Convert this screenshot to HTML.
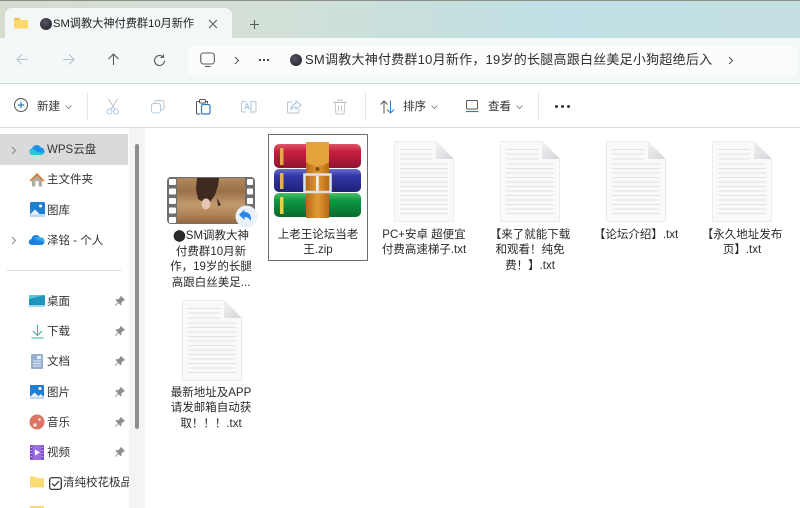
<!DOCTYPE html>
<html><head><meta charset="utf-8"><style>
*{box-sizing:border-box;margin:0;padding:0}
html,body{width:800px;height:508px;overflow:hidden;background:#fff}
body{position:relative;font-family:"Liberation Sans","Noto Sans CJK SC",sans-serif;color:#333;font-size:11.5px}
#w{position:absolute;left:0;top:0;width:800px;height:508px;overflow:hidden;filter:blur(.35px)}
.a{position:absolute}
.t{position:absolute;white-space:nowrap;line-height:16px;font-size:11.5px}
.lbl{position:absolute;width:92px;text-align:center;font-size:11.5px;line-height:15.5px;color:#2a2a2a}
svg{position:absolute;overflow:visible}
.s{fill:none;stroke:#5a5a5a;stroke-width:1.1}
.d{fill:none;stroke:#b9c3cc;stroke-width:1.1}
</style></head><body><div id="w">
<div class="a" style="left:0;top:0;width:800px;height:38px;background:linear-gradient(90deg,#d6dccf 0,#d3e0d8 35%,#c9e0dd 50%,#c0e0e5 70%,#c5e0e2 100%)"></div>
<div class="a" style="left:0;top:0;width:800px;height:1px;background:#8d9088"></div>
<div class="a" style="left:5px;top:8px;width:227px;height:32px;background:#f3f8f7;border-radius:7px 7px 0 0"></div>
<div class="a" style="left:0;top:38px;width:800px;height:46px;background:#f3f8f8;border-bottom:1px solid #d4dadb"></div>
<div class="a" style="left:188px;top:46px;width:609px;height:29px;background:#fbfdfd;border-radius:4px"></div>
<div class="a" style="left:0;top:84px;width:800px;height:44px;background:#fff;border-bottom:1px solid #dcdcdc"></div>

<!-- tab -->
<svg style="left:14px;top:17px" width="14" height="12"><path d="M0 1.500h5l2 1.500h7v8.500H0z" fill="#fbd96a"/><path d="M0 1h5l1.500 1.500H0z" fill="#e8b93c"/></svg>
<div class="a" style="left:40px;top:18px;width:12px;height:12px;border-radius:50%;background:radial-gradient(circle at 40% 35%,#55525f,#23212b)"></div>
<div class="t" style="left:53px;top:16px;font-size:11.2px;color:#222;width:141px;overflow:hidden">SM调教大神付费群10月新作</div>
<svg style="left:208px;top:19px" width="10" height="10"><path class="s" d="M1 1l8 8M9 1l-8 8"/></svg>
<svg style="left:249px;top:19px" width="11" height="11"><path class="s" d="M5.500 1v9M1 5.500h9"/></svg>

<!-- nav -->
<svg style="left:16px;top:53px" width="13" height="13"><path class="d" d="M12 6.500H1M6 1.500l-5 5 5 5"/></svg>
<svg style="left:62px;top:53px" width="13" height="13"><path class="d" d="M1 6.500h11M7 1.500l5 5-5 5"/></svg>
<svg style="left:107px;top:53px" width="13" height="13"><path class="s" d="M6.500 12V1M1.500 6l5-5 5 5"/></svg>
<svg style="left:153px;top:54px" width="13" height="13"><path class="s" d="M11.500 6.500a5 5 0 1 1-1.500-3.600M10.500 .5v3h-3"/></svg>
<svg style="left:200px;top:52px" width="16" height="16"><rect class="s" x=".8" y="1" width="13.500" height="11" rx="2.500"/><path class="s" d="M5 14.500h5.500"/></svg>
<svg style="left:234px;top:56px" width="6" height="9"><path class="s" d="M1 1l3.500 3.500L1 8"/></svg>
<div class="a" style="left:259px;top:59px;width:2px;height:2px;background:#444;box-shadow:4px 0 #444,8px 0 #444"></div>
<div class="a" style="left:290px;top:54px;width:12px;height:12px;border-radius:50%;background:radial-gradient(circle at 40% 35%,#55525f,#23212b)"></div>
<div class="t" style="left:305px;top:52px;font-size:13px;color:#2f2f2f;letter-spacing:.24px">SM调教大神付费群10月新作，19岁的长腿高跟白丝美足小狗超绝后入</div>
<svg style="left:728px;top:56px" width="6" height="9"><path class="s" d="M1 1l3.500 3.500L1 8"/></svg>

<!-- toolbar -->
<svg style="left:14px;top:98px" width="15" height="15"><circle cx="7" cy="7" r="6.500" fill="none" stroke="#555"/><path d="M7 3.800v6.400M3.800 7h6.400" stroke="#2a7cc9" stroke-width="1.200"/></svg>
<div class="t" style="left:37px;top:99px">新建</div>
<svg style="left:65px;top:105px" width="7" height="4"><path d="M.5 .5l3 3 3-3" fill="none" stroke="#777" stroke-width=".8"/></svg>
<div class="a" style="left:87px;top:92px;width:1px;height:28px;background:#e8e8e8"></div>
<svg style="left:106px;top:99px" width="14" height="16"><path d="M2.500 0l6.500 10.500M11.500 0L5 10.500" fill="none" stroke="#b7c2cc"/><circle cx="3.500" cy="12.500" r="2.500" fill="none" stroke="#a9c4de"/><circle cx="10" cy="12.500" r="2.500" fill="none" stroke="#a9c4de"/></svg>
<svg style="left:151px;top:100px" width="14" height="14"><rect x="4" y=".5" width="9" height="9" rx="2" fill="none" stroke="#b9c3cc"/><rect x=".5" y="3.500" width="9" height="9.500" rx="2" fill="#fff" stroke="#b4cde3"/></svg>
<svg style="left:196px;top:99px" width="15" height="16"><path d="M3 2.500H1.500A1 1 0 0 0 .5 3.500v10.500a1 1 0 0 0 1 1h3" fill="none" stroke="#555"/><path d="M10 2.500h1.500v2" fill="none" stroke="#555"/><rect x="3.500" y=".5" width="6" height="3.500" rx="1" fill="#fff" stroke="#555"/><rect x="5.500" y="5.500" width="8.500" height="9.500" rx="1.500" fill="#fff" stroke="#2b7cc4" stroke-width="1.200"/></svg>
<svg style="left:241px;top:100px" width="16" height="14"><path d="M5 1.500H2a1.500 1.500 0 0 0-1.500 1.500v7.500A1.500 1.500 0 0 0 2 12h3M11 1.500h2.500a1.500 1.500 0 0 1 1.500 1.500v7.500a1.500 1.500 0 0 1-1.500 1.500H11" fill="none" stroke="#b7c6d4"/><path d="M3.500 9.500l2.500-6 2.500 6M4.500 7.500h3M10 .5v13" fill="none" stroke="#a9c4de"/></svg>
<svg style="left:287px;top:100px" width="15" height="14"><path d="M5.500 2H2a1.500 1.500 0 0 0-1.500 1.500v8A1.500 1.500 0 0 0 2 13h8.500a1.500 1.500 0 0 0 1.500-1.500V9" fill="none" stroke="#b9c3cc"/><path d="M9 .8l5 4.200-5 4.200V7C6.500 7 5 8 4 10c0-3.500 2-6 5-6.500z" fill="none" stroke="#a9c4de"/></svg>
<svg style="left:333px;top:99px" width="14" height="16"><path d="M.5 3.500h13M5 3.500V1h4v2.500M2 3.500l1 11.500h8l1-11.500M5.500 6.500v6M8.500 6.500v6" fill="none" stroke="#bcc4ca"/></svg>
<div class="a" style="left:365px;top:92px;width:1px;height:28px;background:#e8e8e8"></div>
<svg style="left:380px;top:100px" width="15" height="14"><path d="M4 13.500V1M.5 4.500L4 1l3.500 3.500" fill="none" stroke="#555"/><path d="M10.500 .5V13M7 9.500l3.500 3.500L14 9.500" fill="none" stroke="#2b7cc4"/></svg>
<div class="t" style="left:403px;top:99px">排序</div>
<svg style="left:431px;top:105px" width="7" height="4"><path d="M.5 .5l3 3 3-3" fill="none" stroke="#777" stroke-width=".8"/></svg>
<svg style="left:466px;top:100px" width="13" height="13"><rect x=".5" y=".5" width="11" height="8.500" rx="1" fill="none" stroke="#555"/><path d="M0 11.500h12.500" stroke="#2b7cc4" stroke-width="1.200"/></svg>
<div class="t" style="left:488px;top:99px">查看</div>
<svg style="left:516px;top:105px" width="7" height="4"><path d="M.5 .5l3 3 3-3" fill="none" stroke="#777" stroke-width=".8"/></svg>
<div class="a" style="left:538px;top:92px;width:1px;height:28px;background:#e8e8e8"></div>
<div class="a" style="left:555px;top:105px;width:3px;height:3px;border-radius:50%;background:#333;box-shadow:6px 0 #333,12px 0 #333"></div>

<!-- sidebar -->
<div class="a" style="left:129px;top:128px;width:16px;height:380px;background:#f4f4f4"></div>
<div class="a" style="left:135px;top:144px;width:4px;height:285px;border-radius:2px;background:#8e8e8e"></div>
<div class="a" style="left:0;top:134px;width:128px;height:31px;background:#dadada"></div>
<svg style="left:11px;top:146px" width="6" height="9"><path d="M1 1l3.500 3.500L1 8" fill="none" stroke="#888"/></svg>
<svg style="left:29px;top:143px" width="16" height="13"><path d="M3.500 12A3.300 3.300 0 0 1 3 5.500 5 5 0 0 1 12 4.500 3.800 3.800 0 0 1 12.500 12z" fill="#1c8fe8"/><path d="M1 10a3 3 0 0 1 5-3c1.500 2 4 3 9 2.500-.5 1.500-1.500 2.500-3 2.500H3.500C2.500 12 1.500 11 1 10z" fill="#29c7d8"/></svg>
<div class="t" style="left:47px;top:142px">WPS云盘</div>
<svg style="left:29px;top:172px" width="16" height="15"><path d="M3 7v7.500h10V7L8 3z" fill="#b3aba2"/><rect x="6.300" y="9" width="3.400" height="5.500" fill="#fff"/><path d="M.5 8.500L8 1l7.500 7.500-1.200 1L8 3.500 1.700 9.500z" fill="#dd7a2e"/></svg>
<div class="t" style="left:47px;top:172px">主文件夹</div>
<svg style="left:30px;top:202px" width="15" height="15"><rect width="15" height="15" rx="1.500" fill="#1f7fd2"/><rect x="0" y="12" width="15" height="3" fill="#b9d8f2"/><path d="M0 12.500l5-5 5 5z" fill="#eaf4fc"/><circle cx="10.500" cy="4" r="1.500" fill="#fff"/></svg>
<div class="t" style="left:47px;top:203px">图库</div>
<svg style="left:11px;top:236px" width="6" height="9"><path d="M1 1l3.500 3.500L1 8" fill="none" stroke="#888"/></svg>
<svg style="left:29px;top:234px" width="16" height="11"><path d="M3 11A3 3 0 0 1 2.500 5 4.500 4.500 0 0 1 11 3.500 3.700 3.700 0 0 1 12.500 11z" fill="#1a80e0"/><path d="M5 4a4.500 4.500 0 0 1 6-.5 3.700 3.700 0 0 1 4.500 4.500L8 6z" fill="#38a8ea"/></svg>
<div class="t" style="left:47px;top:233px">泽铭 - 个人</div>
<div class="a" style="left:7px;top:270px;width:114px;height:1px;background:#d9d9d9"></div>

<svg style="left:29px;top:295px" width="16" height="12"><rect width="16" height="12" rx="1" fill="#1f94bd"/><path d="M0 0h16L0 4z" fill="#5ac7d9"/><rect y="10" width="16" height="2" fill="#9fd8e6"/></svg>
<div class="t" style="left:47px;top:294px">桌面</div>
<svg style="left:31px;top:325px" width="13" height="14"><path d="M6.500 0v10M2 6l4.500 4.500L11 6" fill="none" stroke="#35b79a" stroke-width="1.100"/><path d="M.5 13h12" stroke="#35b79a"/></svg>
<div class="t" style="left:47px;top:324px">下载</div>
<svg style="left:31px;top:354px" width="12" height="15"><rect width="12" height="15" rx="1" fill="#96aed0"/><rect x="6" y="2" width="4" height="3" fill="#e8eff7"/><path d="M2 7h8M2 9.500h8M2 12h8" stroke="#e8eff7"/></svg>
<div class="t" style="left:47px;top:354px">文档</div>
<svg style="left:30px;top:385px" width="14" height="14"><rect width="14" height="14" rx="1" fill="#1f7fd2"/><rect y="11.500" width="14" height="2.500" fill="#b9d8f2"/><path d="M0 12l4.500-4.500 5 4.500z" fill="#eaf4fc"/><path d="M8 12l2.500-3 3.500 3z" fill="#eaf4fc"/><circle cx="10" cy="3.500" r="1.500" fill="#fff"/></svg>
<div class="t" style="left:47px;top:385px">图片</div>
<svg style="left:29px;top:414px" width="16" height="16"><circle cx="8" cy="8" r="7.500" fill="#dc7561"/><circle cx="6" cy="11" r="1.800" fill="#f6e3dd"/><circle cx="10.500" cy="5.500" r="1.300" fill="#f6e3dd"/></svg>
<div class="t" style="left:47px;top:415px">音乐</div>
<svg style="left:30px;top:445px" width="14" height="15"><rect width="14" height="15" rx="1" fill="#7a45cf"/><rect x="2.500" width="9" height="15" fill="#9c6fe0"/><path d="M5 4.500l5 3-5 3z" fill="#fff"/><path d="M.8 2.500h1M.8 5.500h1M.8 8.500h1M.8 11.500h1M12.200 2.500h1M12.200 5.500h1M12.200 8.500h1M12.200 11.500h1" stroke="#e7dcf8"/></svg>
<div class="t" style="left:47px;top:445px">视频</div>
<svg style="left:30px;top:476px" width="14" height="12"><path d="M0 .5h5l2 1.500h7v9.500H0z" fill="#fcdc72"/></svg>
<svg style="left:49px;top:477px" width="13" height="13"><rect x=".7" y=".7" width="11.600" height="11.600" rx="2" fill="#fff" stroke="#222" stroke-width="1.200"/><path d="M3 6.500l2.500 2.500 4.500-5" fill="none" stroke="#222" stroke-width="1.100"/></svg>
<div class="t" style="left:63px;top:475px;width:66px;overflow:hidden">清纯校花极品</div>
<svg style="left:30px;top:506px" width="14" height="2"><rect width="14" height="2" fill="#fcdc72"/></svg>

<!-- pins -->
<svg width="0" height="0" style="left:0;top:0"><defs><path id="p" d="M6 0l4 4-1 .8-.6-.2-2 2 .1 2-.8.8L3.300 7 .6 9.800 0 9.800 0 9.300 2.800 6.300.4 3.900l.8-.8 2 .1 2-2-.1-.6z" fill="#8d8d8d"/></defs></svg>
<svg style="left:115px;top:296px" width="10" height="10"><use href="#p"/></svg>
<svg style="left:115px;top:326px" width="10" height="10"><use href="#p"/></svg>
<svg style="left:115px;top:356px" width="10" height="10"><use href="#p"/></svg>
<svg style="left:115px;top:387px" width="10" height="10"><use href="#p"/></svg>
<svg style="left:115px;top:417px" width="10" height="10"><use href="#p"/></svg>
<svg style="left:115px;top:447px" width="10" height="10"><use href="#p"/></svg>

<!-- files -->
<svg width="0" height="0" style="left:0;top:0"><defs>
<linearGradient id="f" x1="0" y1="0" x2="1" y2="1"><stop offset="0" stop-color="#f1f2f3"/><stop offset="1" stop-color="#d3d6d9"/></linearGradient>
<linearGradient id="r" x1="0" y1="0" x2="0" y2="1"><stop offset="0" stop-color="#e0566a"/><stop offset=".3" stop-color="#c8203f"/><stop offset="1" stop-color="#8f1430"/></linearGradient>
<linearGradient id="b" x1="0" y1="0" x2="0" y2="1"><stop offset="0" stop-color="#6a6dd0"/><stop offset=".3" stop-color="#3336a6"/><stop offset="1" stop-color="#1f2275"/></linearGradient>
<linearGradient id="g" x1="0" y1="0" x2="0" y2="1"><stop offset="0" stop-color="#4cc06a"/><stop offset=".3" stop-color="#0f9a42"/><stop offset="1" stop-color="#0a6a2e"/></linearGradient>
<linearGradient id="bl" x1="0" y1="0" x2="1" y2="0"><stop offset="0" stop-color="#b86a16"/><stop offset=".5" stop-color="#e09a34"/><stop offset="1" stop-color="#b86a16"/></linearGradient>
<g id="doc">
<path d="M.5 .5H42L59.500 18V80.500H.5z" fill="#f9f9f9" stroke="#ececec"/>
<path d="M42 .5V18H59.500z" fill="url(#f)"/>
<path d="M6 8.500H38M6 13H38M6 18H38M6 23H54M6 27.500H54M6 32H54M6 36.500H54M6 41H54M6 45.500H54M6 50H54M6 54.500H54M6 59H54M6 63.500H54M6 68H54M6 72.500H54" stroke="#e2e2e2" stroke-width="1"/>
</g></defs></svg>

<!-- video -->
<div class="a" style="left:167px;top:177px;width:88px;height:47px;background:#6f6f6f;border-radius:4px"></div>
<div class="a" style="left:169px;top:179px;width:7px;height:6px;background:#fff;border-radius:1px;box-shadow:0 9.500px #fff,0 19px #fff,0 28.500px #fff,0 38px #fff"></div>
<div class="a" style="left:247px;top:179px;width:6px;height:6px;background:#fff;border-radius:1px;box-shadow:0 9.500px #fff,0 19px #fff,0 28.500px #fff"></div>
<div class="a" style="left:177px;top:178px;width:68px;height:45px;background:linear-gradient(180deg,#b08a5f 0,#9a7048 30%,#c09a6e 58%,#b08658 80%,#94693f 100%)"></div>
<svg style="left:177px;top:178px" width="68" height="45"><path d="M20 0h22l-1 8-3 9-5 7-5 1-7-4-2-10z" fill="#3f2a22"/><ellipse cx="29" cy="26" rx="4.500" ry="5.500" fill="#e6c5b5"/><path d="M40 20l4 7-3 1z" fill="#3a2a20"/></svg>
<svg style="left:235px;top:205px" width="23" height="23"><circle cx="11.500" cy="11.500" r="11" fill="#eaf1f7"/><path d="M9.500 4.500L4 9.800l5.500 5.200v-3c3 0 4.500 1 6.500 4 .5-6-2-9-6.500-9z" fill="#2a86e6"/></svg>
<div class="lbl" style="left:165px;top:229px">⬤SM调教大神<br>付费群10月新<br>作，19岁的长腿<br>高跟白丝美足...</div>

<!-- zip -->
<div class="a" style="left:268px;top:134px;width:100px;height:127px;border:1px solid #6e6e6e"></div>
<svg style="left:274px;top:142px" width="88" height="76">
<rect y="2" width="87" height="24" rx="5" fill="url(#r)"/>
<rect y="27" width="87" height="23" rx="5" fill="url(#b)"/>
<rect y="51" width="87" height="24" rx="5" fill="url(#g)"/>
<rect x="6" y="6" width="3.500" height="17" fill="#e3a84a"/><rect x="6" y="31" width="3.500" height="16" fill="#e3b04a"/><rect x="6" y="55" width="3.500" height="17" fill="#e5d04a"/>
<rect x="32" y="0" width="23" height="76" fill="url(#bl)"/>
<path d="M32 0h23v20c-5 5-18 5-23 0z" fill="#e3a23c"/>
<circle cx="43.500" cy="27" r="2" fill="#7a4a12"/>
<path d="M30.500 32.500H56.500V50H30.500z" fill="none" stroke="#dfe1e4" stroke-width="2.600"/><rect x="42" y="34" width="2.800" height="15" rx="1" fill="#eceef0"/>
</svg>
<div class="lbl" style="left:272px;top:227.500px">上老王论坛当老<br>王.zip</div>

<svg style="left:394px;top:141px" width="60" height="81"><use href="#doc"/></svg>
<div class="lbl" style="left:378px;top:227.500px">PC+安卓 超便宜<br>付费高速梯子.txt</div>
<svg style="left:500px;top:141px" width="60" height="81"><use href="#doc"/></svg>
<div class="lbl" style="left:484px;top:227.500px">【来了就能下载<br>和观看！纯免<br>费！】.txt</div>
<svg style="left:606px;top:141px" width="60" height="81"><use href="#doc"/></svg>
<div class="lbl" style="left:590px;top:227.500px">【论坛介绍】.txt</div>
<svg style="left:712px;top:141px" width="60" height="81"><use href="#doc"/></svg>
<div class="lbl" style="left:696px;top:227.500px">【永久地址发布<br>页】.txt</div>
<svg style="left:182px;top:300px" width="60" height="81"><use href="#doc"/></svg>
<div class="lbl" style="left:165px;top:385.500px">最新地址及APP<br>请发邮箱自动获<br>取！！！.txt</div>
</div></body></html>
